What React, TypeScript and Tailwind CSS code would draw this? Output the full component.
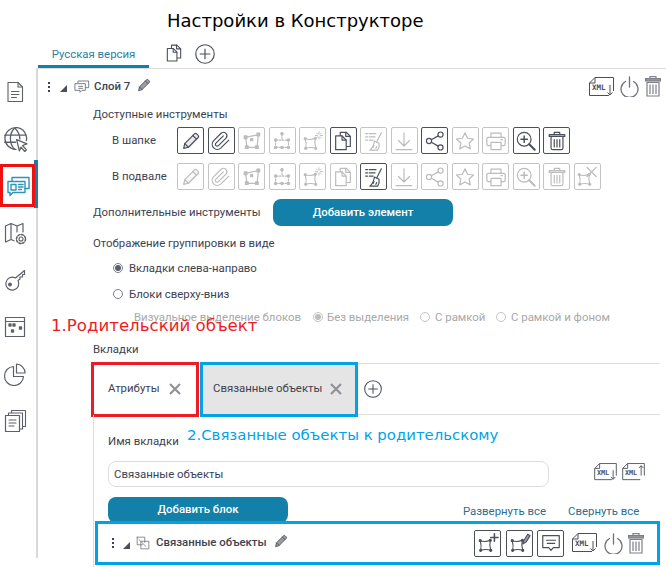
import type { ReactNode } from 'react';

function Svg({ size = 24, children, className = '' }: { size?: number; children: ReactNode; className?: string }) {
  return (
    <svg
      width={size}
      height={size}
      viewBox="0 0 24 24"
      fill="none"
      stroke="currentColor"
      strokeWidth={1.3}
      strokeLinecap="round"
      strokeLinejoin="round"
      className={`shrink-0 ${className}`}
    >
      {children}
    </svg>
  );
}

const Pencil = ({ fill = 0.12 }: { fill?: number }) => (
  <>
    <path d="M4 20l1.2-5.2L15.800 4.200a1.700 1.700 0 0 1 2.400 0l1.600 1.600a1.700 1.700 0 0 1 0 2.400L9.200 18.800z" fill="currentColor" fillOpacity={fill} />
    <path d="M14 6l4 4M5.200 14.800l4 4" />
  </>
);
const Clip = () => (
  <path d="M20.500 11l-8.800 8.800a5.600 5.600 0 0 1-7.900-7.900l8.600-8.600a3.800 3.800 0 0 1 5.300 5.300l-8.500 8.500a1.900 1.900 0 0 1-2.700-2.700l8-8" />
);
const PolyDots = () => (
  <>
    <path d="M5 8l14-3-1.500 14H6.500z" />
    <rect x="3.500" y="6.500" width="3" height="3" fill="currentColor" />
    <rect x="17.400" y="3.400" width="3" height="3" fill="currentColor" />
    <rect x="15.800" y="17.200" width="3" height="3" fill="currentColor" />
    <rect x="4.800" y="17.200" width="3" height="3" fill="currentColor" />
    <rect x="10.500" y="9.500" width="2.200" height="2.200" fill="currentColor" />
  </>
);
const RectHandle = () => (
  <>
    <path d="M12 5v5M5 11v7M19 11v7M6 19h12M6 11h12" strokeDasharray="1.600 1.600" />
    <circle cx="12" cy="4" r="1.300" fill="currentColor" />
    <circle cx="5" cy="11" r="1.300" fill="currentColor" />
    <circle cx="19" cy="11" r="1.300" fill="currentColor" />
    <circle cx="5" cy="19" r="1.300" fill="currentColor" />
    <circle cx="19" cy="19" r="1.300" fill="currentColor" />
    <circle cx="12" cy="19" r="1.300" fill="currentColor" />
  </>
);
const PolyBase = () => (
  <>
    <path d="M3.500 9.500q5.500 1.800 11-0.500q-1.200 5 .5 11q-5.500-1.800-11 0q1.200-5.500-.5-10.500z" strokeWidth={1.200} />
    <circle cx="3.500" cy="9.500" r="1.100" fill="currentColor" />
    <circle cx="14.500" cy="9" r="1.100" fill="currentColor" />
    <circle cx="15" cy="20" r="1.100" fill="currentColor" />
    <circle cx="4" cy="20" r="1.100" fill="currentColor" />
  </>
);
const PolySpark = () => (
  <>
    <PolyBase />
    <path d="M18.500 2v2.500M18.500 7.500V10M14.500 6h2.500M20 6h2.500M15.800 3.300L17 4.500M20 7.500l1.200 1.200M21.200 3.300L20 4.500M17 7.500l-1.200 1.200" strokeWidth={1} />
  </>
);
const PolyPlus = () => (
  <>
    <PolyBase />
    <path d="M19 2v8M15 6h8" strokeWidth={1.700} />
  </>
);
const PolyPencil = () => (
  <>
    <PolyBase />
    <path d="M15 13l1-3.500 4.500-7 2.500 1.500-4.500 7z" fill="currentColor" fillOpacity={0.5} />
  </>
);
const PolyX = () => (
  <>
    <PolyBase />
    <path d="M12 1.500l10 10M22 1.500l-10 10" strokeWidth={1.400} />
  </>
);
const Copy = () => (
  <>
    <path d="M9 6V2.500h6.500L20 7v11h-4" />
    <path d="M15 2.500V7h5" />
    <path d="M4 6.500h7L15.500 11v10.500H4z" fill="white" />
    <path d="M11 6.500V11h4.500" />
  </>
);
const Broom = () => (
  <>
    <path d="M3 4h2M7 4h7M3 7.500h2M7 7.500h6M3 11h2M7 11h4" strokeWidth={1.500} />
    <path d="M20 3l-5 10" />
    <path d="M12.500 12l5 2.500c.5 3 0 5.500-1.500 7.500H7.500c2-1.500 4-4 5-10z" />
    <path d="M11 19l1-2M14 20l1-2" />
  </>
);
const Down = () => <path d="M12 3v14M6 11.500l6 6 6-6M3.500 21.500h17" />;
const Share = () => (
  <>
    <circle cx="18" cy="5" r="2.800" />
    <circle cx="5.500" cy="12" r="2.800" />
    <circle cx="18" cy="19" r="2.800" />
    <path d="M8 10.600l7.600-4.200M8 13.400l7.600 4.200" />
  </>
);
const Star = () => (
  <path d="M12 3l2.800 6 6.500.8-4.800 4.400 1.300 6.400L12 17.400l-5.800 3.200 1.300-6.400-4.800-4.400 6.500-.8z" />
);
const Printer = () => (
  <>
    <path d="M6.500 8V3.500h11V8" />
    <path d="M6.500 17h-3a1.500 1.500 0 0 1-1.500-1.500v-6A1.500 1.500 0 0 1 3.500 8h17a1.500 1.500 0 0 1 1.500 1.500v6a1.500 1.500 0 0 1-1.500 1.500h-3" />
    <path d="M6.500 13.500h11v8h-11z" />
    <path d="M17.500 10.500h1.500" />
  </>
);
const Zoom = () => (
  <>
    <circle cx="10" cy="10" r="7.500" />
    <path d="M10 6.500v7M6.500 10h7" strokeWidth={1.600} />
    <path d="M15.500 15.500l6 6" strokeWidth={2.200} />
  </>
);
const Trash = () => (
  <>
    <path d="M9 5V2.500h6V5" strokeWidth={1.300} />
    <rect x="3.500" y="5" width="17" height="2" />
    <path d="M5.500 7.500v12a2 2 0 0 0 2 2h9a2 2 0 0 0 2-2v-12" />
    <path d="M9 10.500v8M12 10.500v8M15 10.500v8" />
  </>
);
const Comment = () => (
  <>
    <path d="M3 4h18v13h-6.500L12 20l-2.500-3H3z" />
    <path d="M7 9h10M8 12.500h8" />
  </>
);

function ToolButton({ active, children }: { active?: boolean; children: ReactNode }) {
  return (
    <div
      className={`w-[27px] h-[27px] shrink-0 rounded-[2px] flex items-center justify-center border ${
        active ? 'border-[#4a4f5a] text-[#4a4f5a]' : 'border-[#c4c4c4] text-[#bcbcbc]'
      }`}
    >
      <Svg size={22}>{children}</Svg>
    </div>
  );
}

function XmlIcon({ up, w = 25, h = 20 }: { up?: boolean; w?: number; h?: number }) {
  return (
    <svg width={w} height={h} viewBox="0 0 25 20" fill="none" stroke="#4a4f5a" strokeWidth={1} className="shrink-0">
      <path d="M.5 6L6 .5h18.500V14M20 18.500H.5V6" />
      <path d="M.5 6H6V.5" />
      <text x="3" y="13" fontSize="7.500" fontWeight={700} fontFamily="DejaVu Sans Mono, monospace" fill="#4a4f5a" stroke="none">XML</text>
      {up ? <path d="M21 14V3M18.500 5.500L21 3l2.500 2.500" /> : <path d="M21 8v10M18.500 15.500L21 18l2.500-2.500" />}
    </svg>
  );
}

const Power = ({ size = 19 }: { size?: number }) => (
  <svg width={size} height={size + 2} viewBox="0 0 19 21" fill="none" stroke="#6f7279" strokeWidth={1.300} strokeLinecap="round" className="shrink-0">
    <path d="M5.500 5.500a8.500 8.500 0 1 0 8 0" />
    <path d="M9.500 1v10" />
  </svg>
);

const TrashLarge = () => (
  <svg width="16" height="21" viewBox="0 0 16 21" fill="none" stroke="#7d8087" strokeWidth={1.200} className="shrink-0">
    <rect x="5" y=".6" width="6" height="2" />
    <rect x=".6" y="2.600" width="14.800" height="2.400" fill="#9a9a9a" />
    <path d="M2 6.500h12V20H2z" />
    <path d="M5 8.500V18M8 8.500V18M11 8.500V18" />
  </svg>
);

function Dots() {
  return (
    <div className="w-[2px] flex flex-col gap-[2px] shrink-0">
      <div className="w-[2px] h-[2px] bg-[#3d4250]" />
      <div className="w-[2px] h-[2px] bg-[#3d4250]" />
      <div className="w-[2px] h-[2px] bg-[#3d4250]" />
    </div>
  );
}

const Corner = () => (
  <div className="w-0 h-0 border-l-[7px] border-l-transparent border-b-[7px] border-b-[#4a4f5a] shrink-0" />
);

function Radio({ checked, muted }: { checked?: boolean; muted?: boolean }) {
  return (
    <div
      className={`w-[10px] h-[10px] rounded-full border flex items-center justify-center shrink-0 ${
        muted ? 'border-[#c4c4c4]' : 'border-[#7d8087]'
      }`}
    >
      {checked && <div className={`w-[6px] h-[6px] rounded-full ${muted ? 'bg-[#bdbdbd]' : 'bg-[#5a5e68]'}`} />}
    </div>
  );
}

const CrossIcon = () => (
  <svg width="12" height="12" viewBox="0 0 12 12" stroke="#8f9297" strokeWidth={2.200} className="shrink-0">
    <path d="M1 1l10 10M11 1L1 11" />
  </svg>
);

const PlusCircle = ({ size = 19 }: { size?: number }) => (
  <svg width={size} height={size} viewBox="0 0 19 19" fill="none" stroke="#4a4f5a" strokeWidth={1.100} className="shrink-0">
    <circle cx="9.500" cy="9.500" r="8.800" />
    <path d="M9.500 4.500v10M4.500 9.500h10" />
  </svg>
);

const headerTools: [ReactNode, boolean][] = [
  [<Pencil />, true],
  [<Clip />, true],
  [<PolyDots />, false],
  [<RectHandle />, false],
  [<PolySpark />, false],
  [<Copy />, true],
  [<Broom />, false],
  [<Down />, false],
  [<Share />, true],
  [<Star />, false],
  [<Printer />, false],
  [<Zoom />, true],
  [<Trash />, true],
];

const footerTools: [ReactNode, boolean][] = [
  [<Pencil />, false],
  [<Clip />, false],
  [<PolyDots />, false],
  [<RectHandle />, false],
  [<PolySpark />, false],
  [<Copy />, false],
  [<Broom />, true],
  [<Down />, false],
  [<Share />, false],
  [<Star />, false],
  [<Printer />, false],
  [<Zoom />, false],
  [<Trash />, false],
  [<PolyX />, false],
];

const sideIcons: ReactNode[] = [
  <Svg size={24} key="doc">
    <path d="M5 2.500h10l4.500 4.500v14.500H5z" strokeWidth={1.100} />
    <path d="M15 2.500V7h4.500M8.500 11.500h7.500M8.500 14.500h7.500M8.500 17.500h5" strokeWidth={1.100} />
  </Svg>,
  <Svg size={26} key="globe">
    <path d="M13 21.500a10 10 0 1 1 9.500-8" strokeWidth={1.200} />
    <path d="M2.500 8.500h19M2.500 15h10M11.500 2c-5 5-5 14 0 19.500M12 2c3.500 3.500 4.500 7 4.500 10" strokeWidth={1.200} />
    <path d="M13.500 12.500l9.500 4-4 1.500 3.500 4-1.500 1.500-3.500-4-1.500 3.500z" fill="white" strokeWidth={1.200} />
  </Svg>,
  null,
  <Svg size={24} key="map">
    <path d="M2.500 5L8 2.500l6 2.500 6-2.500V11M2.500 5v16L8 18.500l3 1.200M8 2.500v16M14 5v6" strokeWidth={1.200} />
    <circle cx="18" cy="18" r="2" strokeWidth={1.100} />
    <circle cx="18" cy="18" r="4.500" strokeWidth={1.500} strokeDasharray="2 1.500" />
  </Svg>,
  <Svg size={24} key="key">
    <path d="M21.500 2.500l-9 7.500a6.500 6.500 0 1 0 2.500 2.500l2-1.500V9h2.500V6.500h2z" strokeWidth={1.200} />
    <circle cx="7" cy="16.500" r="1.300" fill="currentColor" />
  </Svg>,
  <Svg size={24} key="calendar">
    <path d="M2.500 2.500h19v19h-19zM2.500 6.500h19" strokeWidth={1.200} />
    <rect x="6" y="9" width="2" height="2" fill="currentColor" />
    <rect x="10" y="9" width="2" height="2" fill="currentColor" />
    <rect x="16.500" y="12" width="2" height="2" fill="currentColor" />
    <rect x="8.500" y="15" width="2" height="2" fill="currentColor" />
  </Svg>,
  <Svg size={24} key="pie">
    <path d="M10.500 4.500a9.500 9.500 0 1 0 10 10h-10z" strokeWidth={1.200} />
    <path d="M13.500 2a9 9 0 0 1 8.500 9h-8.500z" strokeWidth={1.200} />
  </Svg>,
  <Svg size={24} key="stack">
    <path d="M2.500 6.500h14v16h-14zM6 14h7M6 11h7M6 17h5" strokeWidth={1.200} />
    <path d="M5.500 6V4h14v16h-2.500M8.500 3.500V1.500h14v16h-2.500" strokeWidth={1.100} />
  </Svg>,
];

export default function App() {
  return (
    <div className='relative w-[666px] h-[567px] overflow-hidden bg-white text-[11.400px] text-[#3d4250] font-["Roboto",sans-serif]'>
      {/* Title */}
      <div className='h-[41px] pl-[167px] flex items-center font-["DejaVu_Sans",sans-serif] text-[18px] text-black'>
        Настройки в Конструкторе
      </div>

      {/* Version tabs */}
      <div className="h-[27px] pl-[38px] flex">
        <div className="w-[111px] border-b-[3px] border-[#1280a8] flex items-center justify-center text-[#2b7fa3] pt-[3px]">
          Русская версия
        </div>
        <div className="ml-[15px] mt-[2px] text-[#4a4f5a]">
          <Svg size={20}>
            <Copy />
          </Svg>
        </div>
        <div className="ml-[11px] mt-[3px] h-[20px]">
          <PlusCircle size={20} />
        </div>
      </div>

      <div className="flex h-[499px]">
        {/* Sidebar */}
        <div className="relative w-[38px] h-[490px] border-r-2 border-[#d9d9d9] flex flex-col items-center text-[#5d6068]">
          {sideIcons.map((icon, i) =>
            icon ? (
              <div key={i} className="h-[47px] w-full flex items-center justify-center pr-[6px] shrink-0">
                {icon}
              </div>
            ) : (
              <div key={i} className="relative h-[47px] w-full flex items-center justify-center shrink-0">
                <div className="absolute right-[-2px] top-[-2px] h-[48px] w-[4px] bg-[#1280a8]" />
                <div className="relative w-[36px] h-[43px] mr-[1px] border-[3px] border-[#ee1111] bg-white flex items-center justify-center text-[#2e93b8]">
                  <Svg size={24}>
                    <path d="M2 7.500h17v11H7l-3 3v-3H2z" strokeWidth={1.400} />
                    <path d="M6 7V3.500h17v11h-4" strokeWidth={1.400} />
                    <path d="M5 10.500h5v5.500H5zM12.500 10.500h4.500M12.500 13h4.500M12.500 15.500h3" strokeWidth={1.400} />
                  </Svg>
                </div>
              </div>
            ),
          )}
        </div>

        {/* Content */}
        <div className="flex-1 min-w-0 flex flex-col border-t border-[#dddddd]">
          {/* Layer header */}
          <div className="h-[35px] pl-[10px] pr-[5px] flex items-center">
            <Dots />
            <div className="ml-[10px] mt-[4px]">
              <Corner />
            </div>
            <div className="ml-[7px] text-[#6a6d75]">
              <Svg size={16}>
                <path d="M2 7h15v10h-5l-3 3v-3H2z" />
                <path d="M6 6V3h16v10h-4M7 11h6M7 14h6" />
              </Svg>
            </div>
            <span className="ml-[4px] font-medium">Слой 7</span>
            <div className="ml-[6px] -mt-[4px] text-[#4a4f5a]">
              <Svg size={16}>
                <Pencil fill={0.55} />
              </Svg>
            </div>
            <div className="ml-auto flex items-center gap-[6px]">
              <XmlIcon />
              <Power />
              <TrashLarge />
            </div>
          </div>

          <div className="pl-[55px] pt-[1px] h-[20px] flex items-center">Доступные инструменты</div>

          <div className="mt-[3px] h-[27px] flex items-center">
            <div className="pl-[74px] pt-[1px] w-[139px]">В шапке</div>
            <div className="flex gap-[3.500px]">
              {headerTools.map(([icon, active], i) => (
                <ToolButton key={i} active={active}>
                  {icon}
                </ToolButton>
              ))}
            </div>
          </div>

          <div className="mt-[9px] h-[27px] flex items-center">
            <div className="pl-[74px] pt-[1px] w-[139px]">В подвале</div>
            <div className="flex gap-[3.500px]">
              {footerTools.map(([icon, active], i) => (
                <ToolButton key={i} active={active}>
                  {icon}
                </ToolButton>
              ))}
            </div>
          </div>

          <div className="mt-[9px] h-[27px] pl-[55px] flex items-center">
            <div className="w-[180px] whitespace-nowrap">Дополнительные инструменты</div>
            <div className="w-[180px] h-[27px] rounded-lg bg-[#1280a8] text-white flex items-center justify-center font-medium">
              Добавить элемент
            </div>
          </div>

          <div className="mt-[7px] h-[20px] pl-[55px] pt-[1px] flex items-center">Отображение группировки в виде</div>

          <div className="mt-[5px] h-[20px] pl-[75px] flex items-center gap-[6px]">
            <Radio checked />
            <span className="pt-[1px]">Вкладки слева-направо</span>
          </div>
          <div className="mt-[6px] h-[20px] pl-[75px] flex items-center gap-[6px]">
            <Radio />
            <span className="pt-[1px]">Блоки сверху-вниз</span>
          </div>

          <div className="mt-[3px] h-[20px] pl-[96px] flex items-center text-[#a8a8a8]">
            <div className="w-[179px] pt-[1px] whitespace-nowrap">Визуальное выделение блоков</div>
            <Radio checked muted />
            <span className="ml-[4px] pt-[1px] w-[93px] whitespace-nowrap">Без выделения</span>
            <Radio muted />
            <span className="ml-[5px] pt-[1px] w-[61px] whitespace-nowrap">С рамкой</span>
            <Radio muted />
            <span className="ml-[5px] pt-[1px] whitespace-nowrap">С рамкой и фоном</span>
          </div>

          <div className="mt-[12px] h-[20px] pl-[55px] pt-[1px] flex items-center">Вкладки</div>

          {/* Tab bar */}
          <div className="mt-[4px] ml-[55px] w-[567px] h-[52px] border-y border-[#dddddd] flex items-center">
            <div className="-ml-[2px] w-[108px] h-[55px] border-[3px] border-[#ed1c24] bg-white flex items-center pl-[14px] shrink-0">
              <span>Атрибуты</span>
              <span className="ml-[9px]">
                <CrossIcon />
              </span>
            </div>
            <div className="ml-[1px] w-[158px] h-[55px] border-[3px] border-[#00a2e8] bg-[#e5e5e5] flex items-center pl-[10px] shrink-0">
              <span>Связанные объекты</span>
              <span className="ml-[8px]">
                <CrossIcon />
              </span>
            </div>
            <div className="ml-[6px]">
              <PlusCircle size={18} />
            </div>
          </div>

          {/* Tab panel */}
          <div className="ml-[55px] border-l border-[#dddddd] pl-[14px] flex flex-col flex-1 min-h-0">
            <div className="mt-[16px] h-[20px] pt-[1px] flex items-center">Имя вкладки</div>
            <div className="mt-[10px] flex items-center">
              <div className="w-[441px] h-[26px] rounded-lg border border-[#dddddd] pl-[5px] pt-[2px] flex items-center">
                Связанные объекты
              </div>
              <div className="ml-[44px] flex gap-[3px] -mt-[5px]">
                <XmlIcon w={25} h={18} />
                <XmlIcon up w={25} h={18} />
              </div>
            </div>
            <div className="mt-[10px] flex">
              <div className="w-[180px] h-[26px] rounded-lg bg-[#1280a8] text-white flex items-center justify-center font-medium">
                Добавить блок
              </div>
              <span className="ml-[175px] mt-[6px] text-[#2b6f8f] whitespace-nowrap">Развернуть все</span>
              <span className="ml-[22px] mt-[6px] text-[#2b6f8f] whitespace-nowrap">Свернуть все</span>
            </div>

            {/* Nested block row */}
            <div className="relative -ml-[13px] -mt-[2px] w-[565px] h-[44px] border-[3px] border-[#00a2e8] bg-white flex items-center pl-[14px] pr-[13px]">
              <Dots />
              <div className="ml-[9px] mt-[4px]">
                <Corner />
              </div>
              <div className="ml-[6px] text-[#6a6d75]">
                <Svg size={14}>
                  <path d="M2 2h13v9M2 2v13h9" />
                  <path d="M9 9h13v13H9z" />
                  <path d="M5 6l12 12" />
                </Svg>
              </div>
              <span className="ml-[6px] font-medium whitespace-nowrap">Связанные объекты</span>
              <div className="ml-[6px] -mt-[4px] text-[#4a4f5a]">
                <Svg size={16}>
                  <Pencil fill={0.55} />
                </Svg>
              </div>
              <div className="ml-auto flex items-center">
                <ToolButton active>
                  <PolyPlus />
                </ToolButton>
                <div className="ml-[5px]">
                  <ToolButton active>
                    <PolyPencil />
                  </ToolButton>
                </div>
                <div className="ml-[4px]">
                  <ToolButton active>
                    <Comment />
                  </ToolButton>
                </div>
                <div className="ml-[8px]">
                  <XmlIcon />
                </div>
                <div className="ml-[7px]">
                  <Power />
                </div>
                <div className="ml-[5px]">
                  <TrashLarge />
                </div>
              </div>
            </div>
          </div>
        </div>
      </div>

      {/* Annotations on top of the screenshot */}
      <div className='absolute left-[51px] top-[314px] font-["DejaVu_Sans",sans-serif] text-[16.600px] leading-[24px] text-[#ed1c24] whitespace-nowrap'>
        1.Родительский объект
      </div>
      <div className='absolute left-[187px] top-[423px] font-["DejaVu_Sans",sans-serif] text-[14.900px] leading-[24px] text-[#00a2e8] whitespace-nowrap'>
        2.Связанные объекты к родительскому
      </div>
    </div>
  );
}
